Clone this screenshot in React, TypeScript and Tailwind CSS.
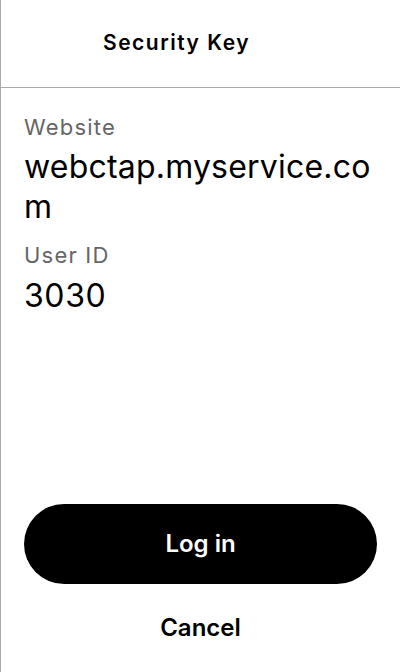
export default function App() {
  return (
    <div
      className="flex h-[672px] w-[400px] flex-col border-l border-[#aaaaaa] bg-white text-black"
      style={{ fontFamily: "Inter, 'Noto Sans', sans-serif" }}
    >
      <header className="flex h-[88px] shrink-0 items-center border-b border-[#aaaaaa] pb-[1px] pl-[102px]">
        <h1 className="text-[21px] font-semibold tracking-[1.5px]">Security Key</h1>
      </header>

      <main className="flex flex-1 flex-col px-[23px] pt-[24px]">
        <div className="text-[22px] leading-[30px] tracking-[1.2px] text-[#666666]">Website</div>
        <div className="mt-[5px] break-all text-[32px] leading-[40px] tracking-[0.2px]">webctap.myservice.com</div>
        <div className="mt-[13px] text-[22px] leading-[30px] tracking-[1.2px] text-[#666666]">User ID</div>
        <div className="mt-[6px] text-[32px] leading-[40px] tracking-[0.6px]">3030</div>
      </main>

      <footer className="flex shrink-0 flex-col px-[23px] pb-[16px]">
        <button className="h-[80px] w-full rounded-full bg-black text-[24px] font-semibold text-white">
          Log in
        </button>
        <button className="mt-[16px] h-[56px] w-full text-[24px] font-semibold text-black">Cancel</button>
      </footer>
    </div>
  )
}
